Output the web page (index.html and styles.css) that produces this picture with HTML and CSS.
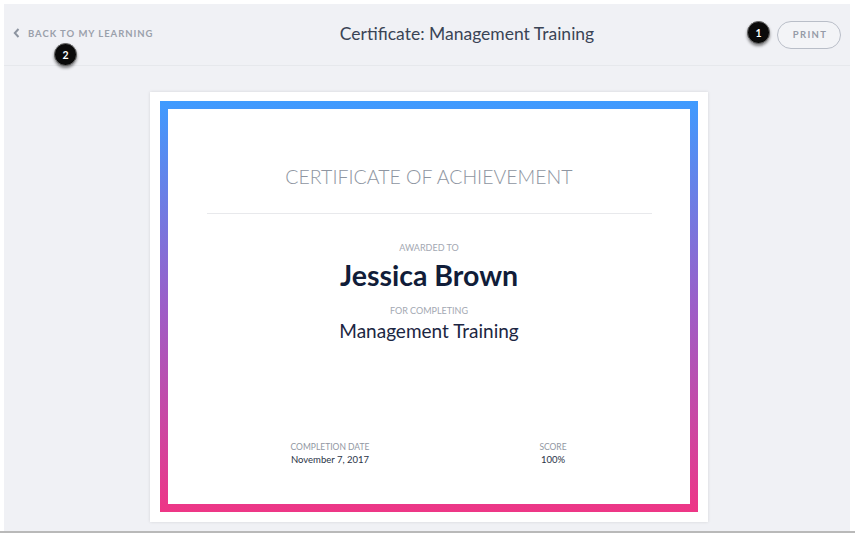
FILE: index.html
```html
<!DOCTYPE html>
<html>
<head>
<meta charset="utf-8">
<link rel="stylesheet" href="styles.css">
</head>
<body>
<div class="window">
  <header class="topbar">
    <a class="back">
      <svg class="chev" width="7" height="10" viewBox="0 0 7 10"><path d="M5.5 1 L1.8 5 L5.5 9" fill="none" stroke="#8d94a0" stroke-width="2"/></svg>
      <span>BACK TO MY LEARNING</span>
    </a>
    <h1 class="title">Certificate: Management Training</h1>
    <button class="print">PRINT</button>
    <span class="badge badge-back">2</span>
    <span class="badge badge-print">1</span>
  </header>
  <main class="stage">
    <div class="card">
      <div class="frame">
        <div class="sheet">
          <h2 class="heading">CERTIFICATE OF ACHIEVEMENT</h2>
          <div class="rule"></div>
          <div class="label">AWARDED TO</div>
          <div class="name">Jessica Brown</div>
          <div class="label label-gap">FOR COMPLETING</div>
          <div class="course">Management Training</div>
          <div class="meta">
            <div class="meta-col">
              <div class="meta-label">COMPLETION DATE</div>
              <div class="meta-value">November 7, 2017</div>
            </div>
            <div class="meta-col">
              <div class="meta-label">SCORE</div>
              <div class="meta-value">100%</div>
            </div>
          </div>
        </div>
      </div>
    </div>
  </main>
</div>
<div class="base"></div>
</body>
</html>
```
FILE: styles.css
```css
* { box-sizing: border-box; }
html, body { margin: 0; padding: 0; background: #ffffff; }
body {
  padding: 4px 5px 0 4px;
  font-family: Lato, "Noto Sans", "Liberation Sans", sans-serif;
}
.window {
  width: 846px;
  height: 527px;
  background: #f0f1f5;
  display: flex;
  flex-direction: column;
}
.base {
  height: 2px;
  margin-left: -4px;
  margin-right: -5px;
  background: #b9b9b9;
}
.topbar {
  position: relative;
  height: 62px;
  border-bottom: 1px solid #e6e8ec;
  display: flex;
  align-items: center;
  padding: 0 9px 0 9px;
  flex-shrink: 0;
}
.back {
  display: flex;
  align-items: center;
  gap: 8px;
  color: #9aa0ab;
  font-size: 9.5px;
  font-weight: 700;
  letter-spacing: 0.95px;
  margin-top: -3px;
  width: 200px;
}
.chev { display: block; }
.title {
  flex: 1;
  margin: 0;
  text-align: center;
  font-size: 17.5px;
  font-weight: 400;
  color: #3a4455;
  margin-top: -2px;
  padding-right: 56px;
}
.print {
  width: 64px;
  height: 28px;
  border: 1.5px solid #b9bec8;
  border-radius: 14px;
  background: #f3f4f7;
  color: #959ba7;
  font-family: inherit;
  font-size: 9.5px;
  font-weight: 700;
  letter-spacing: 1.3px;
  padding: 0 0 0 2px;
  margin-right: 0;
}
.badge {
  position: absolute;
  width: 23px;
  height: 23px;
  border-radius: 50%;
  background: #0a0a0a;
  color: #ffffff;
  font-size: 10.5px;
  font-weight: 700;
  display: flex;
  align-items: center;
  justify-content: center;
  box-shadow: 0 2px 3px rgba(0,0,0,0.45);
  border: 1px solid #666;
}
.badge-back { left: 50px; top: 39px; }
.badge-print { left: 743px; top: 17px; }

.stage {
  flex: 1;
  display: flex;
  justify-content: center;
  padding-top: 26px;
  padding-left: 4px;
}
.card {
  width: 558px;
  height: 430px;
  background: #ffffff;
  padding: 9px 10px 10px 10px;
  box-shadow: 0 0 3px rgba(0,0,0,0.12);
}
.frame {
  height: 100%;
  padding: 8px;
  background: linear-gradient(180deg, #3f9bff 0%, #9c5ec8 50%, #ee3686 100%);
}
.sheet {
  height: 100%;
  background: #ffffff;
  display: flex;
  flex-direction: column;
  align-items: center;
  padding-top: 56px;
}
.heading {
  margin: 0;
  font-size: 19.5px;
  font-weight: 300;
  color: #8e95a1;
  line-height: 24px;
}
.rule {
  width: 445px;
  height: 1px;
  background: #e8e9ec;
  margin: 24px 0 0 1px;
}
.label {
  font-size: 9px;
  color: #a3a8b2;
  line-height: 10px;
  margin-top: 29px;
}
.label-gap { margin-top: 15px; }
.name {
  font-size: 28.5px;
  font-weight: 700;
  color: #111d39;
  line-height: 32px;
  margin-top: 6px;
}
.course {
  font-size: 19px;
  color: #1c2642;
  line-height: 22px;
  margin-top: 4px;
}
.meta {
  margin-top: auto;
  margin-bottom: 38px;
  align-self: stretch;
  display: grid;
  grid-template-columns: 196px 196px;
  column-gap: 27px;
  padding-left: 64px;
}
.meta-col { text-align: center; }
.meta-label {
  font-size: 8.5px;
  color: #9197a2;
  line-height: 11px;
  margin-top: 1px;
}
.meta-value {
  font-size: 9.5px;
  color: #2a3447;
  line-height: 12px;
  margin-top: 1px;
}
```
